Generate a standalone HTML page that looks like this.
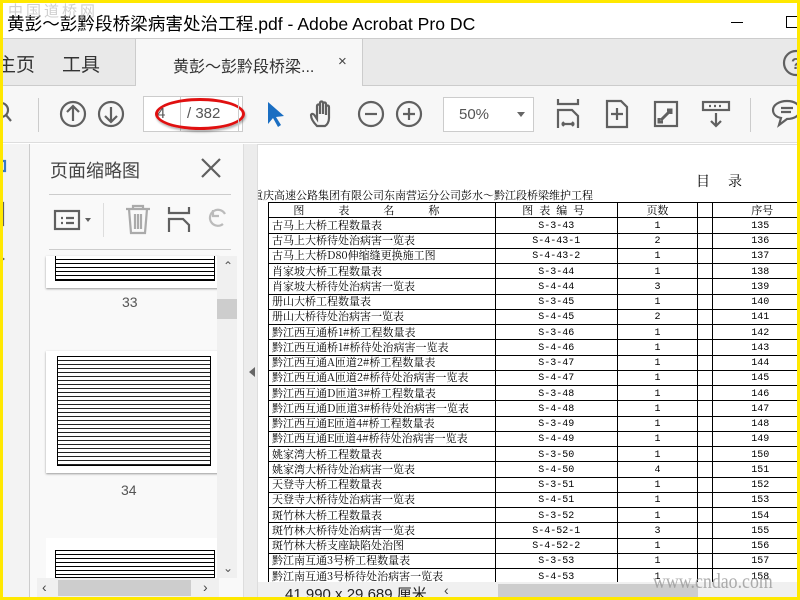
<!DOCTYPE html>
<html><head><meta charset="utf-8"><style>
*{margin:0;padding:0;box-sizing:border-box}
body{width:800px;height:600px;overflow:hidden;background:#ffe800;font-family:"Liberation Sans","Noto Sans CJK SC",sans-serif;position:relative}
.a{position:absolute}
.ic{position:absolute;stroke:#606060;fill:none;stroke-width:2.2}
table{border-collapse:collapse;font-family:"Noto Serif CJK SC","Liberation Serif",serif;font-size:11px;color:#000}
tr{height:15.25px}
td{border:1px solid #000;padding:0;line-height:13px;white-space:nowrap;overflow:hidden;vertical-align:middle}
td.n{padding-left:3px}
td.c{text-align:center;font-family:"Liberation Mono",monospace;font-size:10px;line-height:11px;padding-top:2px}
td.s{text-align:left;padding-left:38px}
</style></head><body>
<div class="a" style="left:3px;top:3px;width:794px;height:594px;background:#fff;overflow:hidden">
 <div class="a" style="left:4px;top:8px;font-size:17.6px;color:#000;font-family:'Liberation Sans','Noto Sans CJK SC',sans-serif">黄彭～彭黔段桥梁病害处治工程.pdf - Adobe Acrobat Pro DC</div>
 <div class="a" style="left:5px;top:-3px;font-size:15px;color:#bbb;letter-spacing:3px;opacity:.7">中国道桥网</div>
 <div class="a" style="left:728px;top:19px;width:12px;height:1px;background:#000"></div>
 <div class="a" style="left:783px;top:13px;width:12px;height:12px;border:1px solid #000"></div>
 <div class="a" style="left:0;top:35px;width:794px;height:48px;background:#e9e9e9;border-top:1px solid #ccc;border-bottom:1px solid #ccc"></div>
 <div class="a" style="left:-6px;top:47px;font-size:19px;color:#333">主页</div>
 <div class="a" style="left:59px;top:47px;font-size:19px;color:#333">工具</div>
 <div class="a" style="left:132px;top:35px;width:228px;height:48px;background:#f7f7f7;border-left:1px solid #ccc;border-right:1px solid #ccc;border-top:1px solid #ccc"></div>
 <div class="a" style="left:170px;top:50px;font-size:16px;color:#333">黄彭～彭黔段桥梁...</div>
 <div class="a" style="left:335px;top:50px;font-size:15px;color:#444">×</div>
 <svg class="ic" style="left:778px;top:45px" width="30" height="30"><circle cx="15" cy="15" r="12"/><text x="10" y="21" font-size="16" fill="#606060" stroke="none" font-family="Liberation Sans" font-weight="bold">?</text></svg>
 <div class="a" style="left:0;top:83px;width:794px;height:57px;background:#f7f7f7;border-bottom:1px solid #ddd"></div>
 <svg class="ic" style="left:-8px;top:95px" width="24" height="30"><circle cx="6" cy="12" r="7"/><path d="M11 17l5 6"/></svg>
 <div class="a" style="left:35px;top:95px;width:1px;height:34px;background:#ccc"></div>
 <svg class="ic" style="left:56px;top:96px" width="30" height="30"><circle cx="14" cy="15" r="12"/><path d="M14 22V8M8 13l6-6 6 6"/></svg>
 <svg class="ic" style="left:94px;top:96px" width="30" height="30"><circle cx="14" cy="15" r="12"/><path d="M14 8v14M8 17l6 6 6-6"/></svg>
 <div class="a" style="left:140px;top:93px;width:100px;height:36px;background:#fff;border:1px solid #ccc"></div>
 <div class="a" style="left:177px;top:93px;width:1px;height:36px;background:#ccc"></div>
 <div class="a" style="left:154px;top:102px;font-size:15px;color:#555">4</div>
 <div class="a" style="left:184px;top:102px;font-size:15px;color:#555">/ 382</div>
 <div class="a" style="left:152px;top:95px;width:90px;height:32px;border:3px solid #e01010;border-radius:50%;box-shadow:1px 2px 2px rgba(0,0,0,.3)"></div>
 <div class="a" style="left:235px;top:95px;width:1px;height:34px;background:#ccc"></div>
 <svg style="position:absolute;left:262px;top:97px" width="24" height="30"><path d="M3 2l0 22 5-6 5 9 3-2-5-8 8-1z" fill="#1a6ec2"/></svg>
 <svg class="ic" style="left:305px;top:96px" width="32" height="32"><path d="M9 27c-4-4-6-8-6-11 1-2 3-1 4 1l2 3V7c0-2 3-2 3 0v8V4c0-2 3-2 3 0v11V5c0-2 3-2 3 0v11V8c0-2 3-2 3 0v11c0 4-2 7-4 8z"/></svg>
 <svg class="ic" style="left:354px;top:96px" width="30" height="30"><circle cx="14" cy="15" r="12"/><path d="M8 15h12"/></svg>
 <svg class="ic" style="left:392px;top:96px" width="30" height="30"><circle cx="14" cy="15" r="12"/><path d="M8 15h12M14 9v12"/></svg>
 <div class="a" style="left:440px;top:94px;width:91px;height:35px;background:#fff;border:1px solid #ccc"></div>
 <div class="a" style="left:456px;top:103px;font-size:15px;color:#555">50%</div>
 <div class="a" style="left:514px;top:109px;border-left:4px solid transparent;border-right:4px solid transparent;border-top:5px solid #666"></div>
 <svg class="ic" style="left:553px;top:95px" width="28" height="34"><path d="M2 1v5h20V1M2 30V12h14l6 6v12M6 26h12M6 26l2-2M6 26l2 2M18 26l-2-2M18 26l-2 2"/></svg>
 <svg class="ic" style="left:602px;top:96px" width="26" height="30"><path d="M2 2h14l6 6v20H2zM12 9v12M6 15h12"/></svg>
 <svg class="ic" style="left:650px;top:96px" width="28" height="30"><rect x="2" y="3" width="22" height="24"/><path d="M8 21l10-10M14 11h4v4M6 19v4h4" stroke-width="3"/></svg>
 <svg class="ic" style="left:698px;top:97px" width="30" height="30"><rect x="2" y="2" width="26" height="8"/><path d="M15 13v13M10 21l5 5 5-5M8 6h2M13 6h2M18 6h2"/></svg>
 <div class="a" style="left:747px;top:95px;width:1px;height:34px;background:#ccc"></div>
 <svg class="ic" style="left:768px;top:95px" width="30" height="32"><path d="M16 3c8 0 13 4 13 9s-5 9-13 9l-8 6 2-7C5 19 2 16 2 12c0-5 6-9 14-9zM10 10h12M10 14h10"/></svg>
 <div class="a" style="left:0;top:141px;width:27px;height:456px;background:#f3f3f3;border-right:1px solid #ccc"></div>
 <svg class="ic" style="left:-8px;top:152px;stroke:#3a78c0" width="20" height="130"><path d="M0 6h10v10H0"/><path d="M0 48h8v22H0M2 100l6 4-6 4M0 175l8 5-8 5" stroke="#606060"/></svg>
 <div class="a" style="left:27px;top:141px;width:216px;height:456px;background:#f9f9f9"></div>
 <div class="a" style="left:47px;top:154px;font-size:18px;color:#444">页面缩略图</div>
 <svg class="ic" style="left:196px;top:153px" width="24" height="24"><path d="M3 3l18 18M21 3L3 21"/></svg>
 <div class="a" style="left:46px;top:191px;width:182px;height:1px;background:#ccc"></div>
 <div class="a" style="left:46px;top:246px;width:182px;height:1px;background:#ccc"></div>
 <svg class="ic" style="left:50px;top:205px" width="42" height="26"><rect x="2" y="3" width="24" height="18"/><path d="M8 10h2M13 10h8M8 15h2M13 15h8"/><path d="M32 10l3 4 3-4z" fill="#606060" stroke="none"/></svg>
 <div class="a" style="left:100px;top:200px;width:1px;height:34px;background:#ddd"></div>
 <svg class="ic" style="left:120px;top:201px;stroke:#aaa" width="30" height="32"><path d="M3 5h24M10 5V2h10v3M6 5l2 24h14l2-24M12 10v15M15 10v15M18 10v15"/></svg>
 <svg class="ic" style="left:164px;top:203px" width="28" height="28"><path d="M2 1v6h20V1M2 26V13h14l6 6v7"/></svg>
 <svg class="ic" style="left:204px;top:203px;stroke:#bbb" width="20" height="28"><path d="M16 18a8 8 0 1 1 2-10M6 4v6h6"/></svg>
 <div class="a" style="left:43px;top:253px;width:173px;height:32px;background:#fff;box-shadow:0 1px 2px #999"></div>
 <div class="a" style="left:52px;top:253px;width:160px;height:25px;border:1px solid #000;border-top:none;background:repeating-linear-gradient(#fff 0 3px,#000 3px 4px)"></div>
 <div class="a" style="left:119px;top:291px;font-size:14px;color:#555">33</div>
 <div class="a" style="left:43px;top:348px;width:173px;height:122px;background:#fff;box-shadow:0 1px 2px #999"></div>
 <div class="a" style="left:54px;top:353px;width:154px;height:110px;border:1px solid #000;background:repeating-linear-gradient(#fff 0 3px,#222 3px 4px)"></div>
 <div class="a" style="left:118px;top:479px;font-size:14px;color:#555">34</div>
 <div class="a" style="left:43px;top:535px;width:173px;height:40px;background:#fff"></div>
 <div class="a" style="left:52px;top:547px;width:160px;height:28px;border:1px solid #000;background:repeating-linear-gradient(#fff 0 3px,#000 3px 4px)"></div>
 <div class="a" style="left:214px;top:253px;width:20px;height:322px;background:#f0f0f0"></div>
 <div class="a" style="left:214px;top:296px;width:20px;height:20px;background:#cdcdcd"></div>
 <div class="a" style="left:220px;top:256px;font-size:12px;color:#555">⌃</div>
 <div class="a" style="left:220px;top:558px;font-size:12px;color:#555">⌄</div>
 <div class="a" style="left:34px;top:575px;width:182px;height:20px;background:#f0f0f0"></div>
 <div class="a" style="left:55px;top:577px;width:133px;height:16px;background:#cdcdcd"></div>
 <div class="a" style="left:39px;top:576px;font-size:14px;color:#444">‹</div>
 <div class="a" style="left:200px;top:576px;font-size:14px;color:#444">›</div>
 <div class="a" style="left:240px;top:141px;width:15px;height:456px;background:#ececec;border-left:1px solid #ddd;border-right:1px solid #ddd"></div>
 <div class="a" style="left:246px;top:364px;border-top:5px solid transparent;border-bottom:5px solid transparent;border-right:6px solid #666"></div>
 <div class="a" style="left:255px;top:141px;width:539px;height:438px;background:#fff;border-top:1px solid #ddd;overflow:hidden">
  <div class="a" style="left:438px;top:26px;font-size:14px;font-family:'Noto Serif CJK SC',serif;letter-spacing:18px">目录</div>
  <div class="a" style="left:-6px;top:42px;font-size:11px;font-family:'Noto Serif CJK SC',serif">重庆高速公路集团有限公司东南营运分公司彭水～黔江段桥梁维护工程</div>
  <table class="a" style="left:10px;top:57px;width:560px">
   <colgroup><col style="width:227px"><col style="width:122px"><col style="width:81px"><col style="width:15px"><col style="width:115px"></colgroup>
   <tr><td class="n" style="text-align:center;letter-spacing:34px">图表名称</td><td style="text-align:center;letter-spacing:6px">图表编号</td><td style="text-align:center">页数</td><td></td><td class="s">序号</td></tr>
   <tr><td class="n">古马上大桥工程数量表</td><td class="c">S-3-43</td><td class="c">1</td><td></td><td class="c s">135</td></tr>
   <tr><td class="n">古马上大桥待处治病害一览表</td><td class="c">S-4-43-1</td><td class="c">2</td><td></td><td class="c s">136</td></tr>
   <tr><td class="n">古马上大桥D80伸缩缝更换施工图</td><td class="c">S-4-43-2</td><td class="c">1</td><td></td><td class="c s">137</td></tr>
   <tr><td class="n">肖家坡大桥工程数量表</td><td class="c">S-3-44</td><td class="c">1</td><td></td><td class="c s">138</td></tr>
   <tr><td class="n">肖家坡大桥待处治病害一览表</td><td class="c">S-4-44</td><td class="c">3</td><td></td><td class="c s">139</td></tr>
   <tr><td class="n">册山大桥工程数量表</td><td class="c">S-3-45</td><td class="c">1</td><td></td><td class="c s">140</td></tr>
   <tr><td class="n">册山大桥待处治病害一览表</td><td class="c">S-4-45</td><td class="c">2</td><td></td><td class="c s">141</td></tr>
   <tr><td class="n">黔江西互通桥1#桥工程数量表</td><td class="c">S-3-46</td><td class="c">1</td><td></td><td class="c s">142</td></tr>
   <tr><td class="n">黔江西互通桥1#桥待处治病害一览表</td><td class="c">S-4-46</td><td class="c">1</td><td></td><td class="c s">143</td></tr>
   <tr><td class="n">黔江西互通A匝道2#桥工程数量表</td><td class="c">S-3-47</td><td class="c">1</td><td></td><td class="c s">144</td></tr>
   <tr><td class="n">黔江西互通A匝道2#桥待处治病害一览表</td><td class="c">S-4-47</td><td class="c">1</td><td></td><td class="c s">145</td></tr>
   <tr><td class="n">黔江西互通D匝道3#桥工程数量表</td><td class="c">S-3-48</td><td class="c">1</td><td></td><td class="c s">146</td></tr>
   <tr><td class="n">黔江西互通D匝道3#桥待处治病害一览表</td><td class="c">S-4-48</td><td class="c">1</td><td></td><td class="c s">147</td></tr>
   <tr><td class="n">黔江西互通E匝道4#桥工程数量表</td><td class="c">S-3-49</td><td class="c">1</td><td></td><td class="c s">148</td></tr>
   <tr><td class="n">黔江西互通E匝道4#桥待处治病害一览表</td><td class="c">S-4-49</td><td class="c">1</td><td></td><td class="c s">149</td></tr>
   <tr><td class="n">姚家湾大桥工程数量表</td><td class="c">S-3-50</td><td class="c">1</td><td></td><td class="c s">150</td></tr>
   <tr><td class="n">姚家湾大桥待处治病害一览表</td><td class="c">S-4-50</td><td class="c">4</td><td></td><td class="c s">151</td></tr>
   <tr><td class="n">天登寺大桥工程数量表</td><td class="c">S-3-51</td><td class="c">1</td><td></td><td class="c s">152</td></tr>
   <tr><td class="n">天登寺大桥待处治病害一览表</td><td class="c">S-4-51</td><td class="c">1</td><td></td><td class="c s">153</td></tr>
   <tr><td class="n">斑竹林大桥工程数量表</td><td class="c">S-3-52</td><td class="c">1</td><td></td><td class="c s">154</td></tr>
   <tr><td class="n">斑竹林大桥待处治病害一览表</td><td class="c">S-4-52-1</td><td class="c">3</td><td></td><td class="c s">155</td></tr>
   <tr><td class="n">斑竹林大桥支座缺陷处治图</td><td class="c">S-4-52-2</td><td class="c">1</td><td></td><td class="c s">156</td></tr>
   <tr><td class="n">黔江南互通3号桥工程数量表</td><td class="c">S-3-53</td><td class="c">1</td><td></td><td class="c s">157</td></tr>
   <tr><td class="n">黔江南互通3号桥待处治病害一览表</td><td class="c">S-4-53</td><td class="c">1</td><td></td><td class="c s">158</td></tr>
  </table>
 </div>
 <div class="a" style="left:255px;top:579px;width:539px;height:18px;background:#f0f0f0"></div>
 <div class="a" style="left:282px;top:580px;font-size:15px;color:#222">41.990 x 29.689 厘米</div>
 <div class="a" style="left:441px;top:579px;font-size:14px;color:#444">‹</div>
 <div class="a" style="left:495px;top:581px;width:200px;height:14px;background:#cdcdcd"></div>
 <div class="a" style="left:650px;top:566px;font-size:21px;color:#999;font-family:'Liberation Serif',serif;opacity:.8;transform:scaleX(.85);transform-origin:left">www.cndao.com</div>
</div>
</body></html>
